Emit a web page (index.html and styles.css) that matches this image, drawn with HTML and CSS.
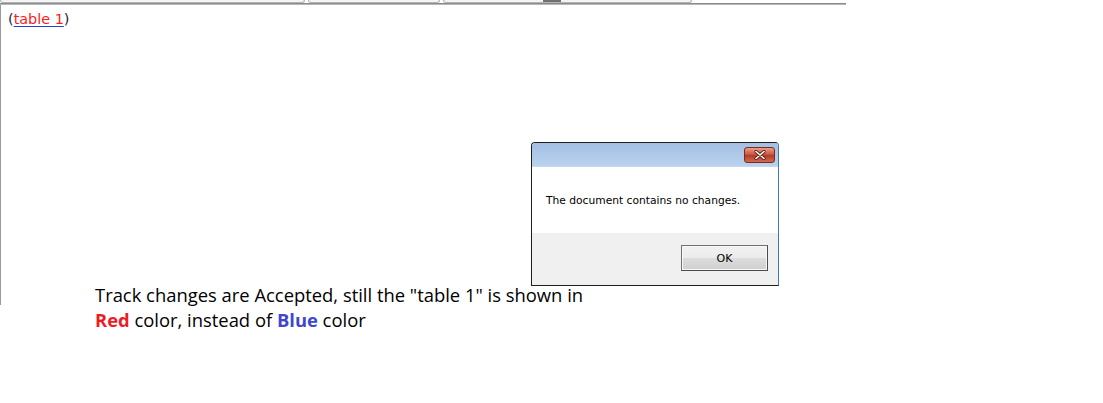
FILE: index.html
```html
<!DOCTYPE html>
<html>
<head>
<meta charset="utf-8">
<link rel="stylesheet" href="styles.css">
</head>
<body>
<div class="page">
  <div class="frame">
    <div class="tabs">
      <div class="tab t1"></div>
      <div class="tab t2"></div>
      <div class="tab t3"><span class="thumb"></span></div>
    </div>
    <div class="rule"></div>
    <div class="doc">
      <p class="ref">(<span class="link">table 1</span>)</p>
    </div>
  </div>
  <div class="dialog">
    <div class="titlebar">
      <div class="close"><svg width="14" height="10" viewBox="0 0 14 10"><path d="M3 1.5 L11 8.5 M11 1.5 L3 8.5" stroke="#5a1a10" stroke-width="3.2" stroke-linecap="round"/><path d="M3 1.5 L11 8.5 M11 1.5 L3 8.5" stroke="#ffffff" stroke-width="1.6" stroke-linecap="round"/></svg></div>
    </div>
    <div class="body">The document contains no changes.</div>
    <div class="footer"><div class="ok">OK</div></div>
  </div>
  <div class="caption">
    <div>Track changes are Accepted, still the "table 1" is shown in</div>
    <div><b class="red">Red</b> color, instead of <b class="blue">Blue</b> color</div>
  </div>
</div>
</body>
</html>
```
FILE: styles.css
```css
html, body { margin: 0; padding: 0; background: #fff; }
.page { position: relative; width: 1103px; height: 403px; overflow: hidden; }
.frame { width: 846px; height: 305px; display: flex; flex-direction: column; }
.tabs { height: 3px; display: flex; gap: 3px; }
.tab { height: 2px; border: 1px solid #b4b4b4; border-top: none; border-radius: 0 0 4px 4px; background: #f4f4f4; position: relative; }
.t1 { width: 303px; }
.t2 { width: 130px; }
.t3 { width: 247px; }
.thumb { position: absolute; left: 99px; top: 0; width: 18px; height: 2px; background: #707070; }
.rule { height: 1px; border-top: 1px solid #8a8a8a; background: #b8b8b8; }
.doc { flex: 1; border-left: 1px solid #9a9a9a; padding: 6px 0 0 7px; }
.ref { margin: 0; font-family: "DejaVu Sans", sans-serif; font-size: 14.4px; line-height: 17px; color: #1a1a40; }
.link { color: #ff1a1a; text-decoration: underline; text-decoration-color: #2040e0; text-underline-offset: 2px; }
.dialog { position: absolute; left: 531px; top: 142px; width: 246px; height: 142px; border: 1px solid #1e1e1e; border-right-color: #3a7ab8; border-radius: 4px 4px 0 0; display: flex; flex-direction: column; background: #fff; }
.titlebar { height: 24px; background: linear-gradient(#a3bfe2, #bad2ee); border-radius: 3px 3px 0 0; display: flex; justify-content: flex-end; align-items: flex-start; padding: 4px 3px 0 0; box-sizing: border-box; border-bottom: 1px solid #c6d8ee; }
.close { width: 31px; height: 16px; box-sizing: border-box; border: 1px solid #7a2a20; border-radius: 3px; background: linear-gradient(#e8a08c, #c8503a 50%, #b03a26 51%, #d06a50); display: flex; align-items: center; justify-content: center; }
.body { height: 66px; display: flex; align-items: center; padding-left: 14px; font-family: "DejaVu Sans", sans-serif; font-size: 10.7px; color: #000; padding-top: 1px; box-sizing: border-box; }
.footer { flex: 1; background: #f0f0f0; display: flex; justify-content: flex-end; align-items: flex-start; padding: 12px 10px 0 0; }
.ok { width: 87px; height: 26px; box-sizing: border-box; border: 1px solid #707070; box-shadow: inset 0 0 0 1px #f8f8f8; border-bottom-color: #4a4a4a; border-right-color: #4a4a4a; background: linear-gradient(#f2f2f2, #ebebeb 50%, #dddddd 51%, #cfcfcf); display: flex; align-items: center; justify-content: center; font-family: "DejaVu Sans", sans-serif; font-size: 11px; color: #000; }
.caption { position: absolute; left: 95px; top: 282px; font-family: "Open Sans", "Lato", sans-serif; font-size: 18.4px; line-height: 25px; color: #000; }
.red { color: #ee1c24; }
.blue { color: #3f48cc; }
```
